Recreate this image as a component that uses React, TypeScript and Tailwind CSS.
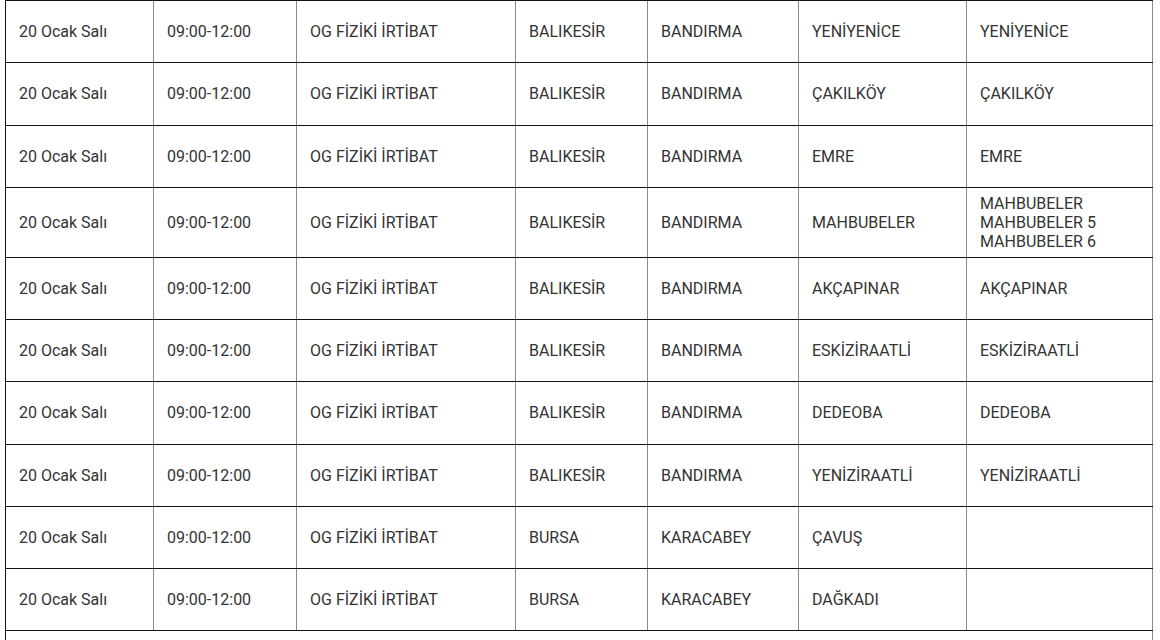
import React from 'react'

interface Outage {
  date: string
  time: string
  type: string
  city: string
  district: string
  area: string
  streets: string[]
}

const rows: Outage[] = [
  { date: '20 Ocak Salı', time: '09:00-12:00', type: 'OG FİZİKİ İRTİBAT', city: 'BALIKESİR', district: 'BANDIRMA', area: 'YENİYENİCE', streets: ['YENİYENİCE'] },
  { date: '20 Ocak Salı', time: '09:00-12:00', type: 'OG FİZİKİ İRTİBAT', city: 'BALIKESİR', district: 'BANDIRMA', area: 'ÇAKILKÖY', streets: ['ÇAKILKÖY'] },
  { date: '20 Ocak Salı', time: '09:00-12:00', type: 'OG FİZİKİ İRTİBAT', city: 'BALIKESİR', district: 'BANDIRMA', area: 'EMRE', streets: ['EMRE'] },
  { date: '20 Ocak Salı', time: '09:00-12:00', type: 'OG FİZİKİ İRTİBAT', city: 'BALIKESİR', district: 'BANDIRMA', area: 'MAHBUBELER', streets: ['MAHBUBELER', 'MAHBUBELER 5', 'MAHBUBELER 6'] },
  { date: '20 Ocak Salı', time: '09:00-12:00', type: 'OG FİZİKİ İRTİBAT', city: 'BALIKESİR', district: 'BANDIRMA', area: 'AKÇAPINAR', streets: ['AKÇAPINAR'] },
  { date: '20 Ocak Salı', time: '09:00-12:00', type: 'OG FİZİKİ İRTİBAT', city: 'BALIKESİR', district: 'BANDIRMA', area: 'ESKİZİRAATLİ', streets: ['ESKİZİRAATLİ'] },
  { date: '20 Ocak Salı', time: '09:00-12:00', type: 'OG FİZİKİ İRTİBAT', city: 'BALIKESİR', district: 'BANDIRMA', area: 'DEDEOBA', streets: ['DEDEOBA'] },
  { date: '20 Ocak Salı', time: '09:00-12:00', type: 'OG FİZİKİ İRTİBAT', city: 'BALIKESİR', district: 'BANDIRMA', area: 'YENİZİRAATLİ', streets: ['YENİZİRAATLİ'] },
  { date: '20 Ocak Salı', time: '09:00-12:00', type: 'OG FİZİKİ İRTİBAT', city: 'BURSA', district: 'KARACABEY', area: 'ÇAVUŞ', streets: [] },
  { date: '20 Ocak Salı', time: '09:00-12:00', type: 'OG FİZİKİ İRTİBAT', city: 'BURSA', district: 'KARACABEY', area: 'DAĞKADI', streets: [] },
]

function Cell({ children }: { children?: React.ReactNode }) {
  return (
    <div className="flex flex-col justify-center min-h-[61.25px] py-[6px] pl-[13px] pr-2 border-r border-[#8a8a8a] leading-[19px]">
      {children}
    </div>
  )
}

export default function App() {
  return (
    <div className="w-[1160px] h-[640px] overflow-hidden bg-white">
      <div
        className="ml-[5px] w-[1148px] border-l border-t border-[#111] text-[16px] text-[#333]"
        style={{ fontFamily: 'Roboto, "Liberation Sans", sans-serif' }}
      >
        {rows.map((row, i) => (
          <div
            key={i}
            className="grid grid-cols-[148px_143px_219px_132px_151px_168px_186px] border-b border-[#111]"
          >
            <Cell>{row.date}</Cell>
            <Cell>{row.time}</Cell>
            <Cell>{row.type}</Cell>
            <Cell>{row.city}</Cell>
            <Cell>{row.district}</Cell>
            <Cell>{row.area}</Cell>
            <Cell>
              {row.streets.map((s) => (
                <div key={s}>{s}</div>
              ))}
            </Cell>
          </div>
        ))}
        {/* next row, cut off by the window */}
        <div className="h-[40px] border-r border-[#8a8a8a]" />
      </div>
    </div>
  )
}
